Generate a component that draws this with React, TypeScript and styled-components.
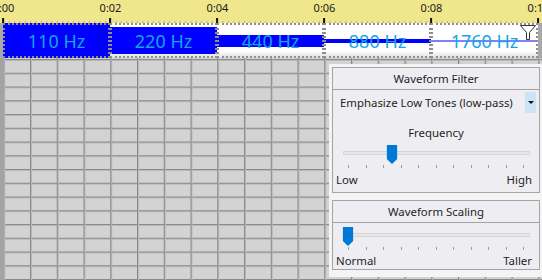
import styled, { createGlobalStyle } from "styled-components";

const SEG = 107;
const ORIGIN = 3.5;

const marks = ["0:00", "0:02", "0:04", "0:06", "0:08", "0:10"];

const bands = [
  { label: "110 Hz", height: 35, color: "#0000ff" },
  { label: "220 Hz", height: 27, color: "#0000ff" },
  { label: "440 Hz", height: 12, color: "#0000ff" },
  { label: "880 Hz", height: 4, color: "#0000ff" },
  { label: "1760 Hz", height: 2, color: "#8080ff" },
];

const GlobalStyle = createGlobalStyle`
  html, body {
    margin: 0;
    padding: 0;
    background: #d3d3d3;
  }
  body {
    font-family: "Noto Sans", "DejaVu Sans", sans-serif;
  }
`;

const Screen = styled.div`
  width: 542px;
  height: 280px;
  overflow: hidden;
  display: flex;
  flex-direction: column;
`;

const Ruler = styled.div`
  position: relative;
  height: 23px;
  flex-shrink: 0;
  overflow: hidden;
  background-color: #f0e68c;
  background-image: linear-gradient(to right, #b5ad70 0 1px, transparent 1px);
  background-size: 5.35px 2px;
  background-position: ${ORIGIN}px 100%;
  background-repeat: repeat-x;
`;

const Mark = styled.div`
  position: absolute;
  top: 0;
  display: flex;
  flex-direction: column;
  align-items: center;
  transform: translateX(-50%);
`;

const MarkLabel = styled.span`
  font-size: 11px;
  line-height: 14px;
  margin-top: 1px;
  color: #1a1a1a;
  white-space: nowrap;
`;

const MarkTick = styled.span`
  width: 2px;
  height: 5px;
  margin-top: 3px;
  background: #111;
`;

const Track = styled.div`
  position: relative;
  height: 35px;
  flex-shrink: 0;
  display: flex;
  padding-left: 3px;
  background: #a8a8a8;
`;

const Block = styled.div<{ $band: number; $color: string }>`
  width: ${SEG}px;
  flex-shrink: 0;
  box-sizing: border-box;
  border: 2px dotted #8e8e8e;
  display: flex;
  align-items: center;
  justify-content: center;
  background-color: #ffffff;
  background-image: linear-gradient(${(p) => p.$color}, ${(p) => p.$color}),
    linear-gradient(to bottom, transparent 80%, #dcdcdc);
  background-size: 100% ${(p) => p.$band}px, 100% 100%;
  background-position: center, 0 0;
  background-repeat: no-repeat;
  background-origin: border-box;
`;

const BandLabel = styled.span`
  font-size: 18px;
  line-height: 22px;
  color: #12a6e6;
  white-space: nowrap;
`;

const FilterIcon = styled.svg`
  position: absolute;
  right: 5px;
  top: 1px;
`;

const Body = styled.div`
  flex: 1;
  display: flex;
  justify-content: flex-end;
  align-items: flex-start;
  padding-top: 6px;
  background-color: #d3d3d3;
  background-image: linear-gradient(to right, #a3a3a3 0 4px, transparent 4px),
    linear-gradient(to right, #8a8a8a 0 1px, #b9b9b9 1px 2px, transparent 2px),
    linear-gradient(to bottom, #8a8a8a 0 1px, #b9b9b9 1px 2px, transparent 2px);
  background-size: 100% 100%, 26.75px 100%, 100% 13.75px;
  background-position: 0 0, 30px 0, 0 1px;
  background-repeat: no-repeat, repeat-x, repeat-y;
`;

const Panel = styled.div`
  width: 213px;
  height: 213px;
  box-sizing: border-box;
  padding: 3px 2px 6px 3px;
  display: flex;
  flex-direction: column;
  gap: 7px;
  background: #f4f4f4;
`;

const Group = styled.section<{ $pad: number }>`
  display: flex;
  flex-direction: column;
  border: 1px solid #a5a5a5;
  background: #eeeef2;
  padding-bottom: ${(p) => p.$pad}px;
  color: #1e1e1e;
  font-size: 11.4px;
`;

const GroupTitle = styled.header`
  height: 21px;
  line-height: 21px;
  text-align: center;
  border-bottom: 1px solid #a5a5a5;
`;

const Select = styled.div`
  display: flex;
  align-items: center;
  justify-content: space-between;
  height: 21px;
  margin: 2px 3px 0 7px;
`;

const SelectArrow = styled.span`
  width: 11px;
  height: 21px;
  display: flex;
  align-items: center;
  justify-content: center;
  background: #cce4f7;
  &::after {
    content: "";
    border-left: 3px solid transparent;
    border-right: 3px solid transparent;
    border-top: 3px solid #111;
  }
`;

const Caption = styled.div`
  margin-top: 11px;
  height: 18px;
  line-height: 18px;
  text-align: center;
`;

const SliderArea = styled.div<{ $top: number }>`
  position: relative;
  height: 19px;
  margin: ${(p) => p.$top}px 9px 0 10px;
`;

const SliderTrack = styled.div`
  margin-top: 6px;
  height: 2px;
  border: 1px solid #d6d6d6;
  background: #e7e7e7;
`;

const Thumb = styled.div`
  position: absolute;
  top: 0;
  width: 11px;
  height: 19px;
  background: #0078d7;
  clip-path: polygon(0 0, 100% 0, 100% 72%, 50% 100%, 0 72%);
  transform: translateX(-50%);
`;

const Ticks = styled.div`
  display: flex;
  justify-content: space-between;
  height: 3px;
  margin: 1px 15px 0 15px;
`;

const Tick = styled.span`
  width: 1px;
  background: #9a9a9a;
`;

const Ends = styled.div<{ $top: number }>`
  display: flex;
  justify-content: space-between;
  height: 16px;
  line-height: 16px;
  margin: ${(p) => p.$top}px 7px 0 3px;
`;

const Slider = ({ value, top }: { value: number; top: number }) => (
  <>
    <SliderArea $top={top}>
      <SliderTrack />
      <Thumb style={{ left: `${5 + value * 176}px` }} />
    </SliderArea>
    <Ticks>
      {Array.from({ length: 11 }, (_, i) => (
        <Tick key={i} />
      ))}
    </Ticks>
  </>
);

const App = () => {
  return (
    <Screen>
      <GlobalStyle />
      <Ruler>
        {marks.map((m, i) => (
          <Mark key={m} style={{ left: `${ORIGIN + i * SEG}px` }}>
            <MarkLabel>{m}</MarkLabel>
            <MarkTick />
          </Mark>
        ))}
      </Ruler>
      <Track>
        {bands.map((b) => (
          <Block key={b.label} $band={b.height} $color={b.color}>
            <BandLabel>{b.label}</BandLabel>
          </Block>
        ))}
        <FilterIcon width="18" height="17" viewBox="0 0 18 17">
          <path
            d="M1.5 1.5 H16.5 L10.5 8.5 V15.5 H7.5 V8.5 Z"
            fill="#ffffff"
            stroke="#333333"
            strokeWidth="1"
            strokeLinejoin="miter"
          />
        </FilterIcon>
      </Track>
      <Body>
        <Panel>
          <Group $pad={4}>
            <GroupTitle>Waveform Filter</GroupTitle>
            <Select>
              <span>Emphasize Low Tones (low-pass)</span>
              <SelectArrow />
            </Select>
            <Caption>Frequency</Caption>
            <Slider value={0.25} top={3} />
            <Ends $top={4}>
              <span>Low</span>
              <span>High</span>
            </Ends>
          </Group>
          <Group $pad={0}>
            <GroupTitle>Waveform Scaling</GroupTitle>
            <Slider value={0} top={4} />
            <Ends $top={3}>
              <span>Normal</span>
              <span>Taller</span>
            </Ends>
          </Group>
        </Panel>
      </Body>
    </Screen>
  );
};

export default App;
